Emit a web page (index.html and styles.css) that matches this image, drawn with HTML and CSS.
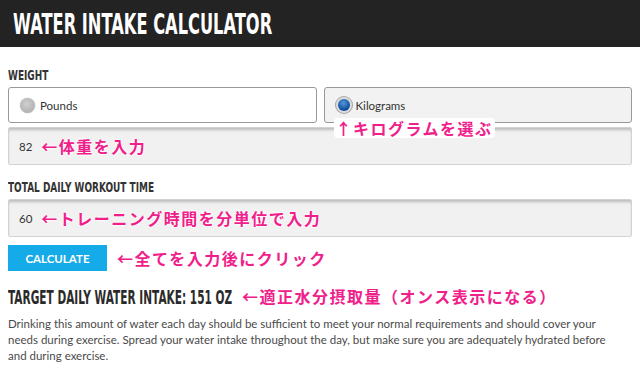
FILE: index.html
```html
<!DOCTYPE html>
<html>
  <head>
    <meta charset="utf-8">
    <meta name="viewport" content="width=device-width, initial-scale=1">
    <title>Water Intake Calculator</title>
    <link rel="stylesheet" href="styles.css">
  </head>
  <body>
    <header class="top">
      <h1><span class="cond">WATER INTAKE CALCULATOR</span></h1>
    </header>
    <main class="calc">
      <div class="label"><span class="cond">WEIGHT</span></div>
      <div class="units">
        <label class="unit">
          <span class="radio"></span>
          <span>Pounds</span>
        </label>
        <label class="unit selected">
          <span class="radio on"></span>
          <span>Kilograms</span>
          <span class="note note-up">↑キログラムを選ぶ</span>
        </label>
      </div>
      <div class="field">
        <span class="value">82</span>
        <span class="note">←体重を入力</span>
      </div>

      <div class="label"><span class="cond">TOTAL DAILY WORKOUT TIME</span></div>
      <div class="field">
        <span class="value">60</span>
        <span class="note">←トレーニング時間を分単位で入力</span>
      </div>

      <div class="actions">
        <button class="calc-btn">CALCULATE</button>
        <span class="note">←全てを入力後にクリック</span>
      </div>

      <div class="result">
        <h2><span class="cond">TARGET DAILY WATER INTAKE: 151 OZ</span></h2>
        <span class="note">←適正水分摂取量（オンス表示になる）</span>
      </div>
      <p class="info">Drinking this amount of water each day should be sufficient to meet your normal requirements and should cover your needs during exercise. Spread your water intake throughout the day, but make sure you are adequately hydrated before and during exercise.</p>
    </main>
  </body>
</html>
```

FILE: styles.css
```css
body, html { margin: 0; padding: 0; background: #fff; font-family: Lato, "Liberation Sans", sans-serif; }
.cond { display: inline-block; white-space: nowrap; transform-origin: left center; font-family: "DejaVu Sans", sans-serif; font-weight: bold; }
.top { background: #232323; height: 47px; padding: 0 13px; display: flex; align-items: center; }
.top h1 { margin: 0; width: 260px; color: #fff; font-size: 29px; line-height: 30px; }
.top h1 .cond { transform: scaleX(0.56); }
.calc { padding: 0 8px; }
.label { font-size: 14px; color: #333; margin-top: 19px; height: 21px; line-height: 18px; }
.label .cond { transform: scaleX(0.64); }
.units { display: flex; gap: 7px; }
.unit { position: relative; flex: 1; height: 34px; border: 1px solid #999; border-radius: 3px; display: flex; align-items: center; gap: 5px; padding-left: 11px; font-size: 11.5px; color: #333; background: #fff; }
.unit.selected { background: #f2f2f2; }
.radio { width: 15px; height: 15px; border-radius: 50%; background: radial-gradient(circle at 45% 40%, #cfcfcf, #a6a6a6); box-shadow: 0 0 1px #888; }
.radio.on { background: radial-gradient(circle at 45% 35%, #5597dc, #0b4a9a 70%); box-shadow: 0 0 0 2px #ddd, 0 0 0 3px #a5a5a5; width: 12px; height: 12px; margin: 0 1px 0 2px; }
.field { height: 36px; margin-top: 4px; background: #f1f1f1; border: 1px solid #d2d2d2; border-radius: 2px; box-shadow: inset 0 3px 3px -1px #bbb; display: flex; align-items: center; padding-left: 10px; gap: 9px; font-size: 11.5px; color: #333; }
.label + .field { margin-top: 0; }
.field + .label { margin-top: 13px; }
.note { font-family: "Noto Sans CJK JP", sans-serif; font-weight: bold; font-size: 16px; letter-spacing: 1.5px; color: #f0208a; text-shadow: 0 0 2px #fff, 0 0 2px #fff, 0 0 3px #fff; }
.note-up { position: absolute; left: 9px; top: 30px; background: #fff; border-radius: 4px; padding: 0 2px; line-height: 20px; }
.actions { display: flex; align-items: center; gap: 10px; margin-top: 8px; height: 26px; }
.calc-btn { background: #15aae8; color: #fff; border: none; width: 99px; height: 26px; font-family: Lato, sans-serif; font-weight: bold; font-size: 11.5px; padding: 0; }
.result { display: flex; align-items: center; gap: 10px; margin-top: 13px; height: 24px; }
.result h2 { margin: 0; width: 224px; flex: none; font-size: 19px; color: #2a2a2a; }
.result h2 .cond { transform: scaleX(0.555); }
.info { margin: 8px 0 0; font-size: 11.5px; line-height: 16px; color: #4a4a4a; padding-right: 12px; }
```
